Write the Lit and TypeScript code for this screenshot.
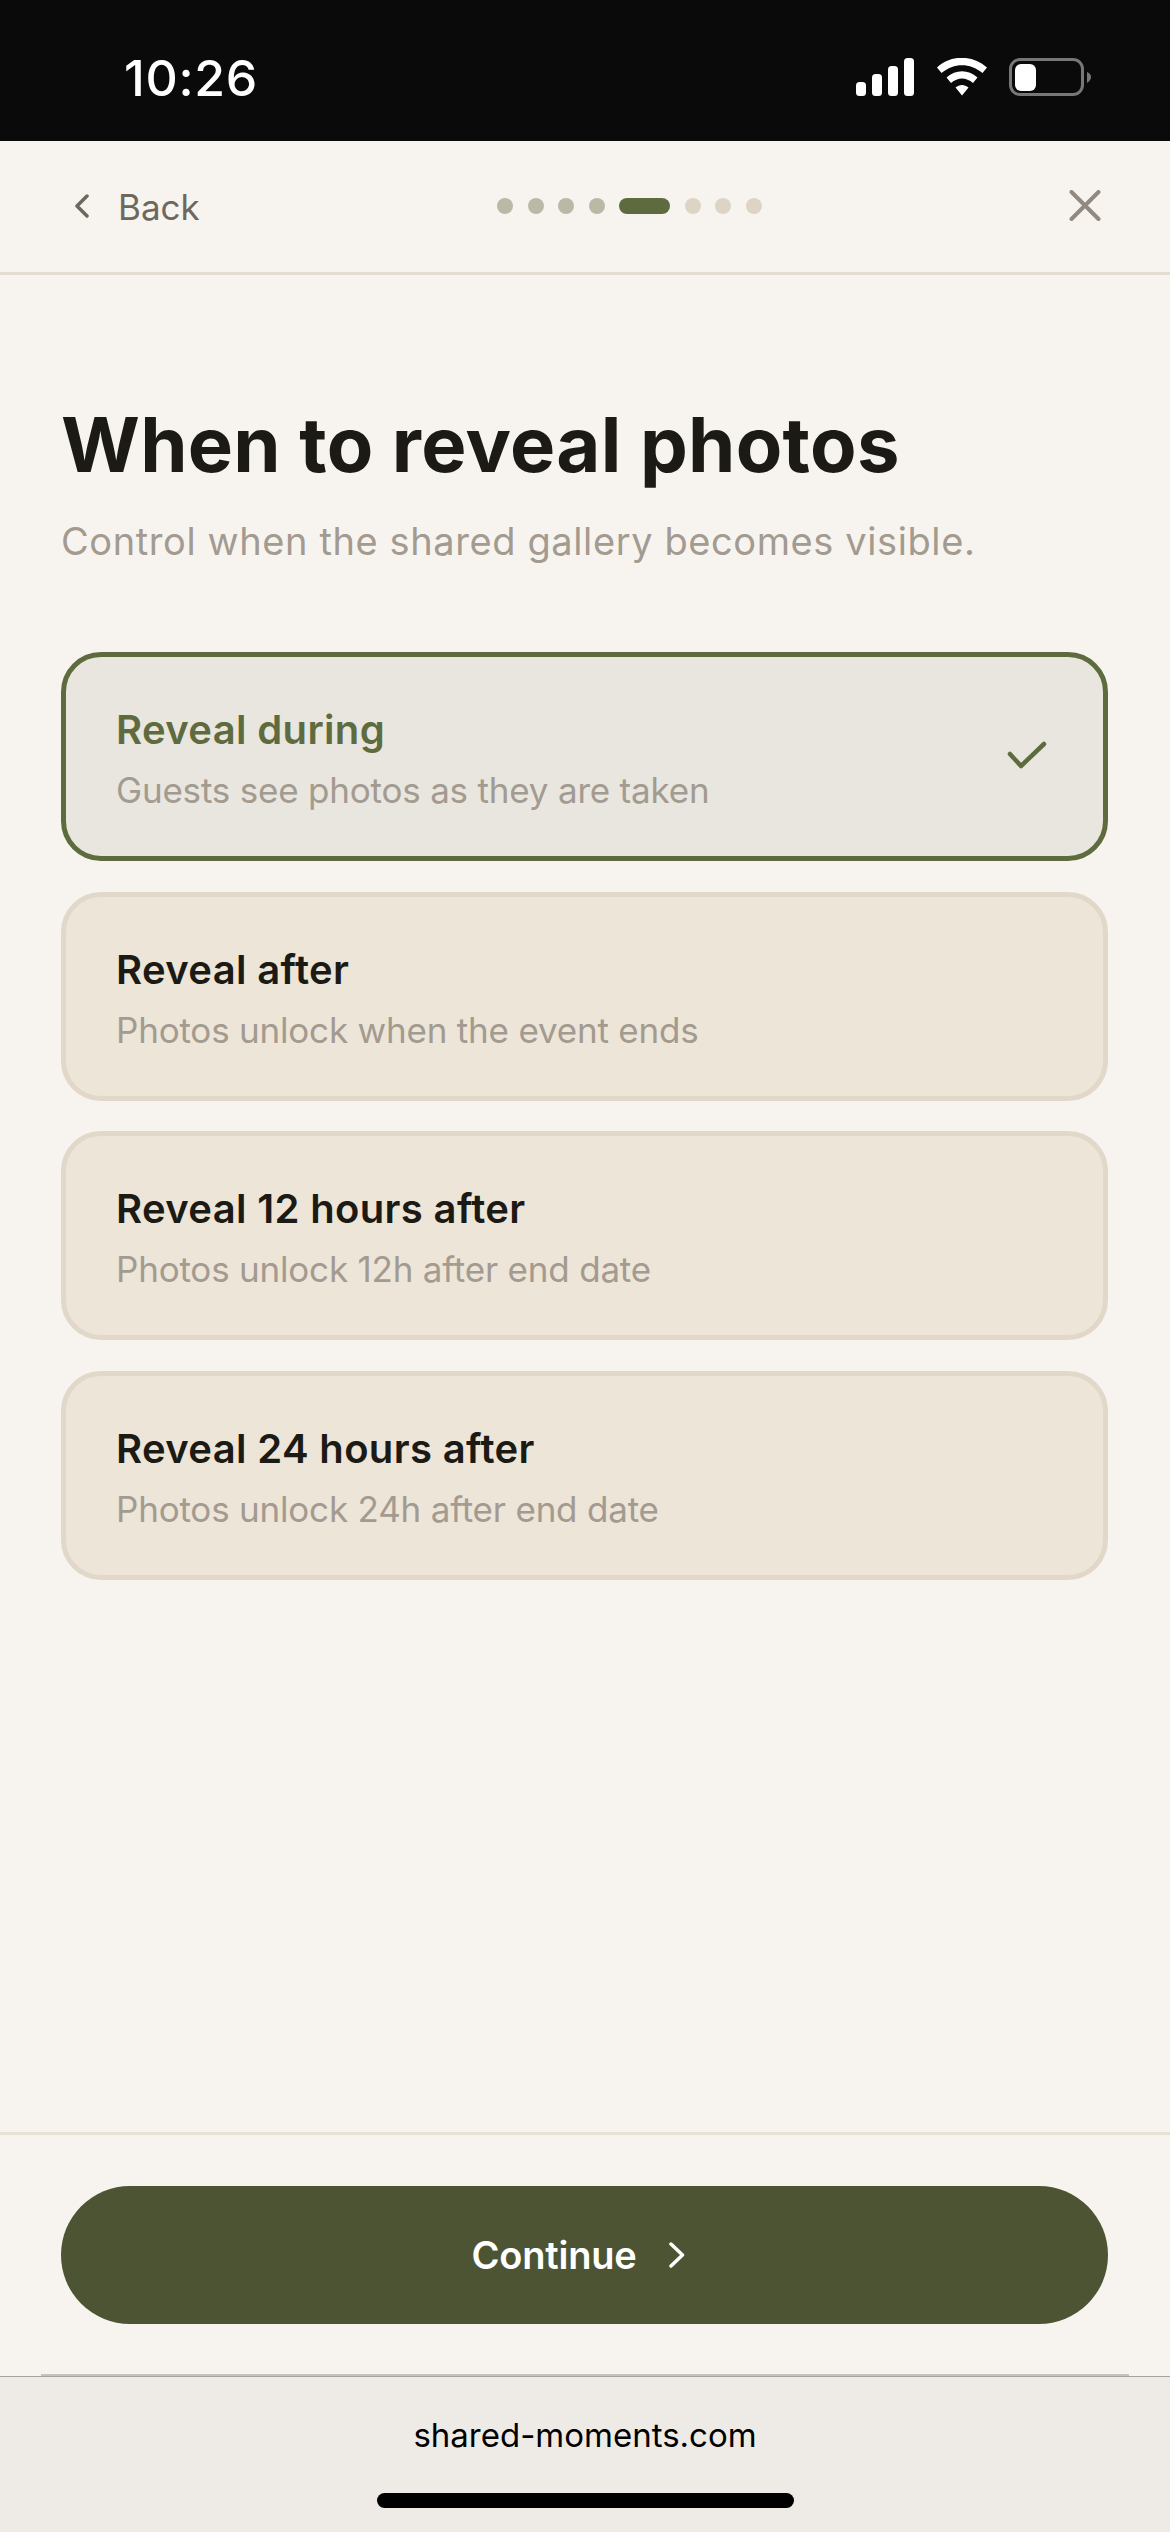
import { LitElement, html, css } from "lit";
import { customElement } from "lit/decorators.js";

const options = [
  { title: "Reveal during", desc: "Guests see photos as they are taken", selected: true },
  { title: "Reveal after", desc: "Photos unlock when the event ends", selected: false },
  { title: "Reveal 12 hours after", desc: "Photos unlock 12h after end date", selected: false },
  { title: "Reveal 24 hours after", desc: "Photos unlock 24h after end date", selected: false },
];

@customElement("app-root")
export class AppRoot extends LitElement {
  static styles = css`
    :host { display: block; width: 1170px; height: 2532px; font-family: "Inter", "Liberation Sans", sans-serif; background: #f7f4ef; color: #1c1a14; }
    * { box-sizing: border-box; }
    .page { height: 2532px; display: flex; flex-direction: column; }
    .status { height: 141px; flex: none; background: #0a0a0a; display: flex; justify-content: space-between; align-items: flex-start; padding: 58px 79px 0 124px; }
    .time { color: #fff; font-size: 50px; font-weight: 500; line-height: 40px; letter-spacing: 0.7px; }
    .status-icons { display: flex; }
    .status-icons svg { display: block; }
    .header { height: 134px; flex: none; display: flex; align-items: center; justify-content: space-between; padding: 0 62px 2px 61px; border-bottom: 3px solid #e3dcd0; }
    .back { display: flex; align-items: center; width: 137px; gap: 29px; padding-left: 13px; color: #6f675c; font-size: 35px; line-height: 44px; white-space: nowrap; }
    .back span { padding-top: 2px; }
    .back svg { flex: none; display: block; }
    .dots { display: flex; align-items: center; gap: 14.6px; }
    .dot { width: 16px; height: 16px; border-radius: 50%; background: #b9baa6; }
    .dot.todo { background: #ddd4c6; }
    .dot.now { width: 51px; border-radius: 8px; background: #5e6b3f; }
    .close { width: 47px; display: flex; justify-content: center; }
    .main { flex: 1; padding: 123px 62px 0 61px; }
    h1 { margin: 0; font-size: 76px; line-height: 92px; font-weight: 700; letter-spacing: 0.3px; white-space: nowrap; }
    .sub { margin: 27px 0 0; font-size: 38px; line-height: 48px; color: #a39a90; white-space: nowrap; letter-spacing: 0.6px; }
    .list { margin-top: 87px; display: flex; flex-direction: column; gap: 30.7px; }
    .card { height: 209px; border: 5px solid #e2d8ca; border-radius: 40px; background: #ede5d8; padding: 5px 55px 0 50px; display: flex; align-items: center; justify-content: space-between; }
    .card.on { border-color: #5e6b3f; background: #e8e6df; }
    .title { font-size: 40px; line-height: 48px; font-weight: 600; letter-spacing: 0.35px; }
    .on .title { color: #5e6b3f; }
    .desc { margin-top: 14px; font-size: 35px; line-height: 44px; color: #a39a90; letter-spacing: -0.2px; }
    .check { display: block; margin-top: -7px; }
    .footer { flex: none; border-top: 3px solid #e8e1d6; padding: 51px 62px 50px 61px; }
    .cta { height: 138px; border-radius: 69px; background: #4c5433; color: #fff; font-size: 38px; font-weight: 600; letter-spacing: -0.2px; display: flex; align-items: center; justify-content: center; gap: 31px; padding-right: 12px; }
    .rule { flex: none; height: 2px; margin: 0 41px; background: #c4c2bf; }
    .browser { flex: none; height: 156px; background: #eeebe7; border-top: 1px solid #a3a2a0; display: flex; flex-direction: column; align-items: center; padding-top: 35px; }
    .url { font-size: 33px; line-height: 46px; color: #000; }
    .home { margin-top: 35px; width: 417px; height: 15px; border-radius: 8px; background: #000; }
  `;

  render() {
    return html`<div class="page">
      <div class="status">
        <div class="time">10:26</div>
        <div class="status-icons">
          <svg width="235" height="38" viewBox="0 0 235 38">
            <g fill="#fff">
              <rect x="0" y="24" width="10" height="14" rx="3.5"/>
              <rect x="16" y="16" width="10" height="22" rx="3.5"/>
              <rect x="32" y="8" width="10" height="30" rx="3.5"/>
              <rect x="48" y="0" width="10" height="38" rx="3.5"/>
              <path d="M81 9.5 C95 -3.5 116 -3.5 131 9.5 L126.5 15 C114 4.5 98 4.5 85.5 15 Z"/>
              <path d="M90.5 19.5 C100 11 112 11 121.5 19.5 L117 25 C110 19 102 19 95 25 Z"/>
              <path d="M99.5 29.5 C103.5 26 108.5 26 112.5 29.5 L106 37.5 Z"/>
            </g>
            <rect x="154.5" y="1.5" width="72" height="35" rx="9.5" fill="none" stroke="#777" stroke-width="3"/>
            <rect x="159" y="6" width="21" height="27" rx="6" fill="#fff"/>
            <path d="M231 14 C234 15 235 17 235 19 C235 21 234 23 231 25 Z" fill="#777"/>
          </svg>
        </div>
      </div>
      <div class="header">
        <div class="back">
          <svg width="15" height="24" viewBox="0 0 15 24"><path d="M13 2 L3 12 L13 22" fill="none" stroke="#6f675c" stroke-width="3.5" stroke-linecap="round" stroke-linejoin="round"/></svg>
          <span>Back</span>
        </div>
        <div class="dots">
          ${[0, 1, 2, 3].map(() => html`<div class="dot"></div>`)}
          <div class="dot now"></div>
          ${[0, 1, 2].map(() => html`<div class="dot todo"></div>`)}
        </div>
        <div class="close">
          <svg width="32" height="31" viewBox="0 0 32 31"><path d="M2.5 2 L29.5 29 M29.5 2 L2.5 29" fill="none" stroke="#918a80" stroke-width="4" stroke-linecap="round"/></svg>
        </div>
      </div>
      <div class="main">
        <h1>When to reveal photos</h1>
        <p class="sub">Control when the shared gallery becomes visible.</p>
        <div class="list">
          ${options.map(
            (o) => html`<div class="card ${o.selected ? "on" : ""}">
              <div>
                <div class="title">${o.title}</div>
                <div class="desc">${o.desc}</div>
              </div>
              ${o.selected
                ? html`<svg class="check" width="42" height="32" viewBox="0 0 42 32"><path d="M4 14 L15 26 L38 4" fill="none" stroke="#5e6b3f" stroke-width="4.5" stroke-linecap="round" stroke-linejoin="round"/></svg>`
                : ""}
            </div>`
          )}
        </div>
      </div>
      <div class="footer">
        <div class="cta">
          <span>Continue</span>
          <svg width="18" height="26" viewBox="0 0 18 26"><path d="M3 2 L14.5 13 L3 24" fill="none" stroke="#fff" stroke-width="3.5" stroke-linecap="round" stroke-linejoin="round"/></svg>
        </div>
      </div>
      <div class="rule"></div>
      <div class="browser">
        <div class="url">shared-moments.com</div>
        <div class="home"></div>
      </div>
    </div>`;
  }
}
